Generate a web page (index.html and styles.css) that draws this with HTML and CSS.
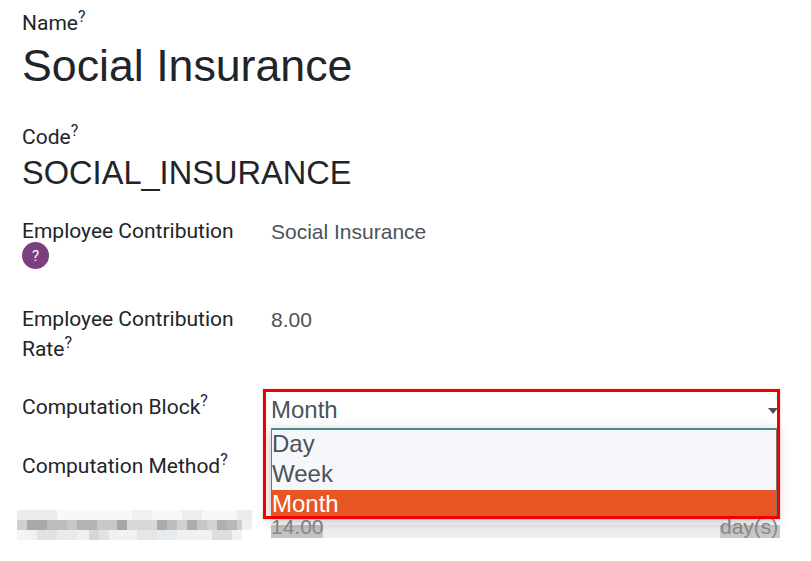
FILE: index.html
```html
<!DOCTYPE html>
<html lang="en">
<head>
    <meta charset="UTF-8">
    <title>Social Insurance</title>
    <link rel="stylesheet" href="styles.css">
</head>
<body>
    <main class="sheet">
        <div class="title-field">
            <label class="field-label">Name<sup>?</sup></label>
            <h1 class="name">Social Insurance</h1>
        </div>
        <div class="title-field code-field">
            <label class="field-label">Code<sup>?</sup></label>
            <h2 class="code">SOCIAL_INSURANCE</h2>
        </div>

        <div class="form-row row-contribution">
            <label class="field-label">Employee Contribution <span class="help-badge">?</span></label>
            <div class="field-value">Social Insurance</div>
        </div>
        <div class="form-row row-rate">
            <label class="field-label">Employee Contribution Rate<sup>?</sup></label>
            <div class="field-value">8.00</div>
        </div>
        <div class="form-row row-block">
            <label class="field-label">Computation Block<sup>?</sup></label>
            <div class="select-wrap">
                <div class="select-value">Month<span class="select-arrow"></span></div>
                <ul class="select-menu">
                    <li>Day</li>
                    <li>Week</li>
                    <li class="selected">Month</li>
                </ul>
                <div class="highlight-box"></div>
            </div>
        </div>
        <div class="form-row row-method">
            <label class="field-label">Computation Method<sup>?</sup></label>
        </div>
        <div class="form-row row-blurred">
            <svg class="mosaic" width="235" height="30" viewBox="0 0 235 30">
                <g>
                    <rect x="0" y="0" width="235" height="10" fill="#f8f8f8"/>
                    <rect x="0" y="0" width="10" height="10" fill="#ececec"/>
                    <rect x="10" y="0" width="30" height="10" fill="#e9ebec"/>
                    <rect x="115" y="0" width="20" height="10" fill="#f1f1f1"/>
                    <rect x="165" y="0" width="20" height="10" fill="#eeeeee"/>
                    <rect x="220" y="0" width="15" height="10" fill="#ececec"/>
                </g>
                <g>
                    <rect x="0" y="10" width="235" height="10" fill="#e4e4e4"/>
                    <rect x="0" y="10" width="10" height="10" fill="#cfcfcf"/>
                    <rect x="10" y="10" width="20" height="10" fill="#a9a9a9"/>
                    <rect x="30" y="10" width="20" height="10" fill="#bcbcbc"/>
                    <rect x="50" y="10" width="10" height="10" fill="#c4c8ca"/>
                    <rect x="60" y="10" width="20" height="10" fill="#b3b3b3"/>
                    <rect x="80" y="10" width="20" height="10" fill="#c8c8c8"/>
                    <rect x="100" y="10" width="10" height="10" fill="#a6a6a6"/>
                    <rect x="110" y="10" width="20" height="10" fill="#d6d9da"/>
                    <rect x="130" y="10" width="10" height="10" fill="#d8d8d8"/>
                    <rect x="140" y="10" width="10" height="10" fill="#ababab"/>
                    <rect x="150" y="10" width="10" height="10" fill="#bdbdbd"/>
                    <rect x="160" y="10" width="10" height="10" fill="#d0d0d0"/>
                    <rect x="170" y="10" width="10" height="10" fill="#a9adb0"/>
                    <rect x="180" y="10" width="10" height="10" fill="#c6c6c6"/>
                    <rect x="190" y="10" width="10" height="10" fill="#d2d2d2"/>
                    <rect x="200" y="10" width="10" height="10" fill="#b0b0b0"/>
                    <rect x="210" y="10" width="10" height="10" fill="#b8b8b8"/>
                    <rect x="220" y="10" width="5" height="10" fill="#cdd0d2"/>
                    <rect x="225" y="10" width="10" height="10" fill="#f0f0f0"/>
                </g>
                <g>
                    <rect x="0" y="20" width="225" height="10" fill="#f1f1f1"/>
                    <rect x="0" y="20" width="10" height="10" fill="#f4f4f4"/>
                    <rect x="20" y="20" width="20" height="10" fill="#e2e2e2"/>
                    <rect x="40" y="20" width="20" height="10" fill="#e8eaeb"/>
                    <rect x="72" y="20" width="10" height="10" fill="#d5d8da"/>
                    <rect x="82" y="20" width="10" height="10" fill="#e0e3e5"/>
                    <rect x="120" y="20" width="20" height="10" fill="#e6e6e6"/>
                    <rect x="140" y="20" width="20" height="10" fill="#e8ebee"/>
                    <rect x="195" y="20" width="20" height="10" fill="#dedede"/>
                </g>
            </svg>
            <div class="blurred-value">
                <span class="blurred-num">14.00</span>
                <span class="blurred-unit">day(s)</span>
            </div>
        </div>
    </main>
</body>
</html>
```

FILE: styles.css
```css
:root {
    --label-color: #212529;
    --value-color: #4c5359;
    --menu-bg: #f5f7fa;
    --menu-active: #e95522;
    --teal: #4e8a8c;
}

html, body {
    margin: 0;
    height: 561px;
    overflow: hidden;
    background-color: #fff;
}

body {
    font-family: Roboto, "Liberation Sans", sans-serif;
    color: var(--label-color);
}

.sheet {
    padding: 8px 34px 0 22px;
}

.field-label {
    display: block;
    font-size: 21px;
    line-height: 30px;
    color: var(--label-color);
}

.field-label sup {
    font-size: 16px;
    line-height: 0;
}

.name {
    margin: 0;
    font-family: "Liberation Sans", Arial, sans-serif;
    font-size: 44.7px;
    font-weight: 400;
    line-height: 56px;
}

.code-field {
    margin-top: 28px;
}

.code {
    margin: 0;
    font-family: "Liberation Sans", Arial, sans-serif;
    font-size: 32.6px;
    font-weight: 400;
    line-height: 42px;
}

.form-row {
    display: grid;
    grid-template-columns: 249px 1fr;
}

.row-contribution {
    margin-top: 22px;
    height: 88px;
}

.row-rate {
    height: 88px;
}

.row-block {
    height: 59px;
}

.row-method {
    height: 59px;
}

.field-value {
    font-size: 21px;
    line-height: 32px;
    color: var(--value-color);
    font-family: "Liberation Sans", Arial, sans-serif;
}

.help-badge {
    display: flex;
    align-items: center;
    justify-content: center;
    width: 27px;
    height: 27px;
    margin-top: -4px;
    border-radius: 50%;
    background-color: #7c3f80;
    color: #fff;
    font-size: 15px;
    font-weight: 400;
}

.select-wrap {
    position: relative;
    height: 30px;
}

.select-value {
    display: flex;
    justify-content: space-between;
    font-family: "Liberation Sans", Arial, sans-serif;
    font-size: 24px;
    line-height: 36px;
    color: var(--value-color);
    height: 36px;
}

.select-arrow {
    align-self: center;
    margin-top: 2px;
    margin-right: -1px;
    width: 0;
    height: 0;
    border-left: 5px solid transparent;
    border-right: 5px solid transparent;
    border-top: 6px solid var(--value-color);
}

.select-menu {
    position: absolute;
    z-index: 2;
    top: 36px;
    left: 0;
    right: 0;
    margin: 0;
    padding: 0;
    list-style: none;
    background-color: var(--menu-bg);
    border: 1px solid #767676;
    border-top: 2px solid var(--teal);
    box-shadow: 0 3px 12px rgba(0, 0, 0, 0.25);
    font-family: "Liberation Sans", Arial, sans-serif;
    font-size: 24px;
    line-height: 28px;
    color: var(--value-color);
}

.select-menu li {
    height: 30px;
}

.select-menu .selected {
    height: 28px;
    background-color: var(--menu-active);
    color: #fff;
}

.highlight-box {
    position: absolute;
    z-index: 3;
    top: -3px;
    left: -8px;
    right: -3px;
    height: 124px;
    border: 3px solid #f00000;
    box-shadow: 0 0 1px rgba(240, 0, 0, 0.5);
    pointer-events: none;
}

.row-blurred {
    margin-left: -5px;
    grid-template-columns: 254px 1fr;
    height: 30px;
}

.mosaic {
    display: block;
}

.blurred-value {
    display: flex;
    justify-content: space-between;
    height: 13px;
    margin-top: 15px;
    margin-right: -3px;
    background-color: #f0f0f0;
    color: #8b8b8b;
    font-family: "Liberation Sans", Arial, sans-serif;
    font-size: 21px;
    line-height: 4px;
}

.blurred-num {
    background-color: #c4c4c4;
    width: 52px;
}

.blurred-unit {
    background-color: #c8c8c8;
    width: 60px;
}
```
